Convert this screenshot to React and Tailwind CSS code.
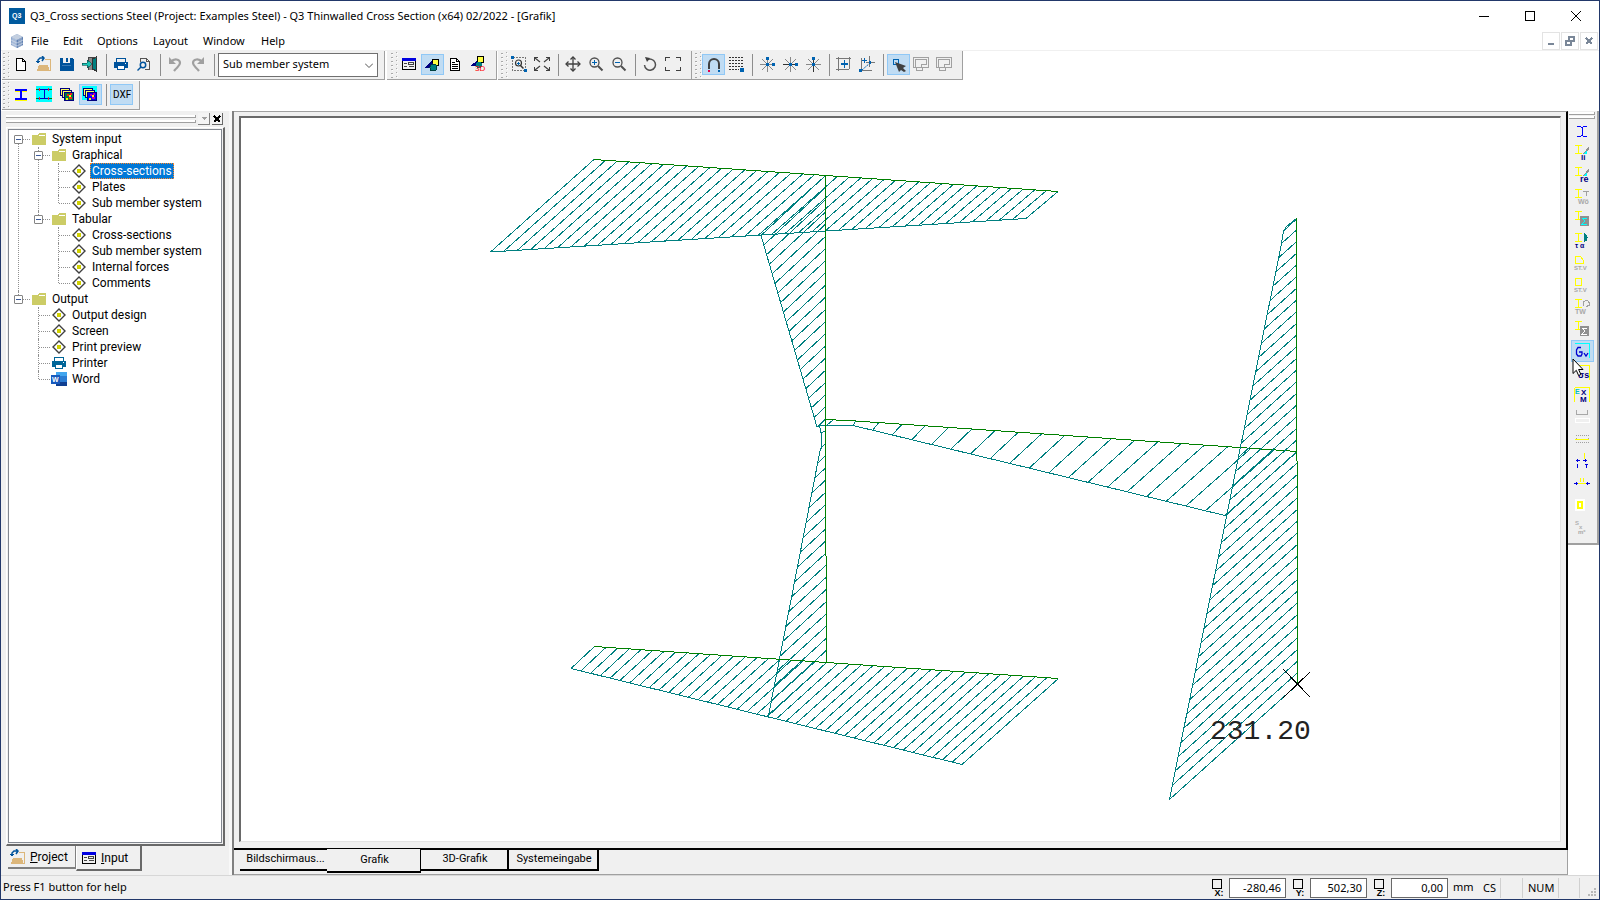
import clsx from 'clsx';

/* ---------- small building blocks ---------- */

function Icon({ children, w = 16, h = 16, className = 'size-4' }) {
  return (
    <svg viewBox={`0 0 ${w} ${h}`} className={clsx('shrink-0', className)} fill="none" shapeRendering="crispEdges" aria-hidden="true">
      {children}
    </svg>
  );
}

function Grip() {
  return (
    <svg width="8" height="26" viewBox="0 0 8 26" className="-mt-0.5 shrink-0" shapeRendering="crispEdges" aria-hidden="true">
      {[0, 1, 2, 3, 4, 5, 6].map((i) => (
        <g key={i}>
          <rect x="1" y={1 + i * 4} width="2" height="1" fill="#a8a8a8" />
          <rect x="2" y={2 + i * 4} width="1" height="1" fill="#fff" />
          <rect x="6" y={i * 4} width="1" height="1" fill="#aaa" />
          <rect x="7" y={1 + i * 4} width="1" height="1" fill="#fff" />
        </g>
      ))}
    </svg>
  );
}

function Separator() {
  return <span className="w-2 flex justify-center shrink-0"><span className="w-px h-[22px] bg-[#8d8d8d]" /></span>;
}

function ToolButton({ label, active, children }) {
  return (
    <button
      type="button"
      aria-label={label}
      title={label}
      className={clsx(
        'w-[23px] h-[21px] pl-0.5 pt-px flex items-start shrink-0 border',
        active ? 'bg-[#c0dcf3] border-[#90c8f6]' : 'border-transparent'
      )}
    >
      {children}
    </button>
  );
}

function Toolbar({ children, className }) {
  return (
    <div className={clsx('h-[29px] pt-[3px] flex items-start bg-[#f0f0f0] border-r border-b border-[#a0a0a0]', className)}>
      <Grip />
      {children}
    </div>
  );
}

/* ---------- toolbar icons ---------- */

const NewIcon = () => (
  <Icon><path d="M3.5 2.5h6l3 3v9h-9zM9.5 2.5v3h3" stroke="#000" fill="#fff" /></Icon>
);

const OpenIcon = () => (
  <Icon>
    <path d="M1 15l2-6h9l2 6z" fill="#dcb67a" />
    <path d="M9 3.5h5.500V15" stroke="#dcb67a" />
    <path d="M2 6V4l2-2h4M6 0l2 2-2 3" stroke="#00539c" strokeWidth="1.5" shapeRendering="auto" />
    <path d="M0 5h4L2 8z" fill="#00539c" />
  </Icon>
);

const SaveIcon = () => (
  <Icon><path d="M1 2h3v5h7V2h2l2 2v11H1zM7 2h2v4H7z" fill="#00539c" /><path d="M3 9.500h9" stroke="#3a7ab5" /></Icon>
);

const ExitIcon = () => (
  <Icon>
    <path d="M7 1h8v13H7z" fill="#8a8a8a" />
    <path d="M10.500 3l4-2v14l-4-2z" fill="#008080" stroke="#333" />
    <path d="M6.500 1h8M6.500 1v5M6.500 10v4" stroke="#444" />
    <path d="M0 7h5V4l5 4-5 4V9H0z" fill="#19c5b5" stroke="#004848" strokeWidth=".6" />
  </Icon>
);

const PrintIcon = ({ color = '#00539c' }) => (
  <Icon>
    <path d="M3.5 6V2.5h9V6" stroke={color} />
    <path d="M1 6h14v6H1z" fill={color} />
    <path d="M4.5 9.5h7v4h-7z" fill="#fff" stroke={color} />
    <path d="M12 7h1v1h-1z" fill="#fff" />
  </Icon>
);

const PreviewIcon = () => (
  <Icon>
    <path d="M4.500 6V2.500h6l3 3v8H9M10.500 2.500v3h3" stroke="#555" />
    <g shapeRendering="auto" stroke="#00539c" strokeWidth="1.5"><circle cx="7" cy="9" r="2.700" /><path d="M5 11L1.500 14.500" /></g>
  </Icon>
);

const UndoIcon = ({ flip }) => (
  <Icon>
    <g transform={flip ? 'matrix(-1 0 0 1 16 0)' : undefined} shapeRendering="auto">
      <path d="M4 6c3-4 9-3 9 1 0 3-3 4-6 8" stroke="#a0a0a0" strokeWidth="2.200" />
      <path d="M2 1v7h7z" fill="#a0a0a0" />
    </g>
  </Icon>
);

const FormIcon = () => (
  <Icon>
    <path d="M1.500 2.500h13v11h-13z" fill="#f0f0f0" stroke="#000" />
    <path d="M1 2h14v3H1z" fill="#0000e0" />
    <path d="M3 7.500h3M3 10.500h3" stroke="#444" />
    <path d="M7.500 6.500h5v2h-5zM7.500 10.500h5" stroke="#444" />
  </Icon>
);

const ShapesIcon = () => (
  <Icon>
    <path d="M8.500 3.500h6v6h-6z" fill="#ffff40" stroke="#000" />
    <path d="M0 12l8-7 2 7z" fill="#000080" />
    <circle cx="9.500" cy="11.500" r="3.500" fill="#008080" stroke="#004040" />
  </Icon>
);

const DocIcon = () => (
  <Icon><path d="M3.500 2.500h6l3 3v9h-9zM9.500 2.500v3h3" fill="#fff" stroke="#000" /><path d="M5 6.500h3M5 8.500h6M5 10.500h6M5 12.500h6" stroke="#000" /></Icon>
);

const Shapes3dIcon = () => (
  <Icon>
    <path d="M7.500 .5h6v6h-6z" fill="#ffff40" stroke="#000" />
    <path d="M0 10l7-5 3 5z" fill="#000080" />
    <circle cx="9" cy="9" r="3.200" fill="#008080" />
    <text x="5" y="15" fontSize="8" fill="#f00" fontFamily="Liberation Sans">3D</text>
  </Icon>
);

const ZoomWindowIcon = () => (
  <Icon>
    <path d="M1.500 1.500h13v13h-13z" stroke="#777" strokeDasharray="2 1" />
    <path d="M0 0h3v3H0zM13 13h3v3h-3z" fill="#0063b1" />
    <g shapeRendering="auto"><circle cx="7.500" cy="7" r="3" stroke="#333" strokeWidth="1.200" /><path d="M9.500 9.500l3 3" stroke="#333" strokeWidth="1.500" /></g>
    <path d="M6 7.500h3M7.500 6v3" stroke="#0063b1" />
  </Icon>
);

const ZoomExtentsIcon = () => (
  <Icon>
    <path d="M.5 5V1.500H4M12 1.500h3.500V5M15.500 11v3.500H12M4 14.500H.5V11" stroke="#404040" />
    <path d="M1 2l5 4M15 2l-5 4M1 14l5-4M15 14l-5-4" stroke="#404040" shapeRendering="auto" strokeWidth="1.200" />
  </Icon>
);

const PanIcon = () => (
  <Icon>
    <path d="M8 1v14M1 8h14" stroke="#404040" shapeRendering="auto" strokeWidth="1.300" />
    <path d="M5.500 3.500L8 1l2.500 2.500M5.500 12.500L8 15l2.500-2.500M3.500 5.500L1 8l2.500 2.500M12.500 5.500L15 8l-2.500 2.500" stroke="#404040" shapeRendering="auto" strokeWidth="1.300" />
  </Icon>
);

const ZoomIcon = ({ plus }) => (
  <Icon>
    <g shapeRendering="auto" stroke="#505050"><circle cx="6.500" cy="6.500" r="4.500" strokeWidth="1.300" /><path d="M10 10l4.500 4.500" strokeWidth="2" /></g>
    <path d={plus ? 'M4 6.500h5M6.500 4v5' : 'M4 6.500h5'} stroke="#0063b1" />
  </Icon>
);

const RotateIcon = () => (
  <Icon><g shapeRendering="auto"><path d="M5 4a5.500 5.500 0 1 1-2.500 5" stroke="#505050" strokeWidth="1.500" /><path d="M3 1l5 1-3 4z" fill="#404040" /></g></Icon>
);

const FullIcon = () => (
  <Icon><path d="M.5 5V1.500H5M11 1.500h4.500V5M15.500 11v3.500H11M5 14.500H.5V11" stroke="#404040" /></Icon>
);

const MagnetIcon = () => (
  <Icon>
    <path d="M4 13V8a5 5 0 0 1 10 0v5" stroke="#404040" strokeWidth="2" shapeRendering="auto" />
    <path d="M3 14h2v2H3z" fill="#e0004d" /><path d="M13 14h2v2h-2z" fill="#0063b1" />
  </Icon>
);

const GridIcon = () => (
  <Icon>
    {[1, 4, 7, 10, 13].map((y) => (
      <path key={y} d={`M1 ${y + 0.5}h${y > 10 ? 10 : 14}`} stroke="#333" strokeDasharray="2 1" />
    ))}
    <path d="M12 12h4v4h-4z" fill="#0063b1" />
  </Icon>
);

function StarIcon({ kind }) {
  const main = kind === 'h' ? 'M1 8.500h15' : kind === 'v' ? 'M8.500 1v15' : '';
  return (
    <Icon>
      <path d="M3 3l11 11M14 3L3 14M8.500 1v15M1 8.500h15" stroke="#888" shapeRendering="auto" />
      {main && <path d={main} stroke="#333" />}
      <path d="M7 7h3v3H7z" fill="#0063b1" />
      {kind !== 'h' && <path d="M7 1h3v3H7z" fill="#0063b1" />}
      {kind !== 'v' && <path d="M13 7h3v3h-3z" fill="#0063b1" />}
    </Icon>
  );
}

const PlusFrameIcon = () => (
  <Icon><path d="M0 2.500h15M13.500 1v12M2.500 1v14M0 13.500h13" stroke="#777" /><path d="M5 8h7M8.500 4v8" stroke="#0063b1" strokeWidth="1.500" /></Icon>
);

const PlusAxisIcon = () => (
  <Icon>
    <path d="M2.500 2v12.500H13M10.500 0v11M7 6.500h9" stroke="#777" />
    <path d="M3 14l8-7" stroke="#0063b1" strokeDasharray="2 1" shapeRendering="auto" />
    <path d="M0 13h3v3H0zM10 5h2v3h-2z" fill="#0063b1" /><path d="M3 4.500h5M5.500 2v5" stroke="#0063b1" />
  </Icon>
);

const SelectIcon = () => (
  <Icon><path d="M3.500 3.500h5v5h-5z" stroke="#0063b1" /><path d="M5 6l11 4-3 2 3 3-2 1-3-2-2 2z" fill="#404040" shapeRendering="auto" /></Icon>
);

const CopyFrameIcon = () => (
  <Icon><path d="M.5 1.500h15v10h-6v3h-6v-3h-3zM2.500 3.500h11v5h-5v3h-6z" stroke="#a0a0a0" /></Icon>
);

const BeamIcon = () => (
  <Icon><path d="M2 3h12v2H9v7h5v2H2v-2h5V5H2z" fill="#0000ff" /><path d="M2 5.500h5M9 5.500h5M2 14.500h12" stroke="#ff0" /></Icon>
);

const BeamGridIcon = () => (
  <Icon>
    <path d="M0 0h16v16H0z" fill="#0ff" />
    <path d="M2 3.500h12M2 12.500h12M8.500 3v10" stroke="#0000c0" />
    <path d="M3.500 2v3M12.500 2v3M3.500 11v3M12.500 11v3" stroke="#e03030" />
    <path d="M0 3h2v1H0zM14 3h2v1h-2zM0 12h2v1H0zM14 12h2v1h-2z" fill="#008000" />
  </Icon>
);

const LayersIcon = ({ filled }) => (
  <Icon>
    {filled && <path d="M0 0h15v14H0z" fill="#0ff" />}
    <path d="M1.500 2.500h9v7h-9z" fill="#ffff60" stroke="#000080" />
    <path d="M3.500 4.500h9v7h-9z" fill="#ffff60" stroke="#000080" />
    <path d="M5.500 6.500h9v8h-9z" fill={filled ? '#0000ff' : '#008040'} stroke="#000080" />
    <path d="M8 8h2v2H8zM11 7h2v2h-2zM10 11h3v2h-3z" fill={filled ? '#c000a0' : '#f02020'} />
    <path d="M7 12h2v2H7zM10 9h2v2h-2z" fill="#ff0" />
  </Icon>
);

/* ---------- tree ---------- */

const FolderIcon = () => (
  <Icon w={14} h={13} className="w-3.5 h-[13px]"><path d="M0 2h5l2-2h6.500v12H0z" fill="#cccc66" /><path d="M7 2.500h6" stroke="#fff" /></Icon>
);

const DiamondIcon = () => (
  <Icon w={14} h={14} className="size-3.5">
    <path d="M7 1l6 6-6 6-6-6z" fill="#fff" stroke="#404040" strokeWidth="1.400" shapeRendering="auto" />
    <circle cx="7" cy="7" r="2.500" fill="#d0d000" />
  </Icon>
);

const WordIcon = () => (
  <Icon>
    <path d="M5 1h11v14H5z" fill="#2b7cd3" /><path d="M5 1h11v4H5z" fill="#41a5ee" /><path d="M5 11h11v4H5z" fill="#103f91" />
    <path d="M0 4h9v9H0z" fill="#185abd" />
    <text x="1" y="11" fontSize="7" fontWeight="700" fill="#fff" fontFamily="Liberation Sans">W</text>
  </Icon>
);

const tree = [
  {
    label: 'System input',
    children: [
      { label: 'Graphical', children: [{ label: 'Cross-sections', selected: true }, { label: 'Plates' }, { label: 'Sub member system' }] },
      { label: 'Tabular', children: [{ label: 'Cross-sections' }, { label: 'Sub member system' }, { label: 'Internal forces' }, { label: 'Comments' }] },
    ],
  },
  {
    label: 'Output',
    children: [{ label: 'Output design' }, { label: 'Screen' }, { label: 'Print preview' }, { label: 'Printer', icon: 'printer' }, { label: 'Word', icon: 'word' }],
  },
];

function NodeIcon({ node }) {
  if (node.children) return <FolderIcon />;
  if (node.icon === 'printer') return <PrintIcon color="#006699" />;
  if (node.icon === 'word') return <WordIcon />;
  return <DiamondIcon />;
}

function TreeNode({ node, root, last }) {
  return (
    <li className="relative">
      {/* dotted guide line down to the next sibling */}
      <span className={clsx('absolute left-[9px] w-px border-l border-dotted border-[#909090]', root ? 'top-2' : 'top-0', last ? 'h-2' : 'bottom-0')} />
      <div className="h-4 flex items-center">
        <span className="relative w-[19px] h-4 flex items-center justify-center shrink-0">
          <span className="absolute left-[10px] -right-0.5 top-2 border-t border-dotted border-[#909090]" />
          {node.children && (
            <button type="button" aria-label={`Collapse ${node.label}`} className="relative size-[9px] bg-white border border-[#848484] rounded-[1px] flex items-center justify-center">
              <span className="w-[5px] h-px bg-[#3c5a9a]" />
            </button>
          )}
        </span>
        <span className="relative w-[22px] flex justify-center shrink-0"><NodeIcon node={node} /></span>
        <button
          type="button"
          className={clsx('h-4 px-0.5 leading-4 whitespace-nowrap', node.selected && 'bg-[#0078d7] text-white outline-1 -outline-offset-1 outline-dotted outline-[#ff8728]')}
        >
          {node.label}
        </button>
      </div>
      {node.children && (
        <ul className="pl-5">
          {node.children.map((child, i) => (
            <TreeNode key={child.label} node={child} last={i === node.children.length - 1} />
          ))}
        </ul>
      )}
    </li>
  );
}

function Sidebar() {
  return (
    <aside className="w-[228px] shrink-0 flex flex-col pl-[5px] pr-1 font-['Roboto',sans-serif] text-xs">
      <div className="h-4 flex items-center pr-0.5">
        <div className="flex-1 flex flex-col gap-0.5">
          <span className="h-[3px] border-b border-r border-[#a0a0a0] bg-white" />
          <span className="h-[3px] border-b border-r border-[#a0a0a0] bg-white" />
        </div>
        <button type="button" aria-label="Panel menu" className="ml-0.5 w-3 h-3 border-r border-b border-[#808080] bg-[#f4f4f4] flex items-center justify-center">
          <Icon w={6} h={3} className="w-1.5 h-[3px]"><path d="M0 0h6L3 3z" fill="#a0a0a0" /></Icon>
        </button>
        <button type="button" aria-label="Close panel" className="ml-0.5 w-[11px] h-3 border-r border-b border-[#696969] bg-[#f4f4f4] flex items-center justify-center">
          <Icon w={8} h={8} className="size-2"><path d="M1 1l6 6M7 1L1 7" stroke="#000" strokeWidth="2" /></Icon>
        </button>
      </div>
      <div className="flex-1 border-t border-l border-white border-r-2 border-b-2 border-r-[#696969] border-b-[#696969] p-px flex">
        <ul className="flex-1 bg-white border border-[#828790] pt-px">
          {tree.map((node, i) => (
            <TreeNode key={node.label} node={node} root={i === 0} last={i === tree.length - 1} />
          ))}
        </ul>
      </div>
      <div className="h-[29px] flex items-start text-xs">
        <button type="button" className="ml-0.5 w-[68px] h-[23px] flex items-center gap-1 pl-0.5 border-b-2 border-r border-[#808080]">
          <OpenIcon /><span><u>P</u>roject</span>
        </button>
        <button type="button" className="w-[66px] h-[25px] flex items-center gap-1 pl-1 border-l border-l-white border-r-2 border-b-2 border-[#696969]">
          <FormIcon /><span><u>I</u>nput</span>
        </button>
      </div>
    </aside>
  );
}

/* ---------- stress diagram ---------- */

// base = member axis, edge = stress ordinate line, n = number of hatch intervals
const members = [
  { base: [594, 159.5, 1058, 191.5], edge: [490.5, 252, 1026, 218.5], n: 40 },
  { base: [825.5, 175.5, 825.5, 419], edge: [761, 235.5, 817, 427], n: 20 },
  { base: [825.5, 443.5, 826.5, 662.5], edge: [820.5, 448.5, 768.5, 715.5], n: 18 },
  { base: [594.5, 646.5, 1058.5, 678.5], edge: [571, 668.5, 962, 764.5], n: 40 },
  { base: [855.5, 421, 1297.5, 451.5], edge: [853, 425.5, 1225, 515.5], n: 19 },
  { base: [1296.5, 230, 1297.5, 684.5], edge: [1281.5, 243.5, 1169.5, 799.5], n: 39 },
];

const at = (a, b, t) => a + (b - a) * t;

function Member({ base, edge, n }) {
  const [x1, y1, x2, y2] = base;
  const [u1, v1, u2, v2] = edge;
  const lines = Array.from({ length: n + 1 }, (_, i) => i / n);
  return (
    <g>
      {lines.map((t) => (
        <line key={t} x1={at(x1, x2, t)} y1={at(y1, y2, t)} x2={at(u1, u2, t)} y2={at(v1, v2, t)} stroke="#008080" />
      ))}
      <line x1={u1} y1={v1} x2={u2} y2={v2} stroke="#008080" />
      <line x1={x1} y1={y1} x2={x2} y2={y2} stroke="#008000" />
    </g>
  );
}

function Diagram() {
  return (
    <svg viewBox="241 118 1319 723" className="absolute inset-0 w-full h-full" fill="none" shapeRendering="crispEdges" role="img" aria-label="Shear stress diagram">
      {members.map((m, i) => <Member key={i} {...m} />)}
      {/* transitions at the web joint and the free end of the right flange */}
      <path d="M817 427l2.500-1.500 1.500 7.500v15.500M819 425h11l23 .5M819.500 425.500l6-6M827 425l6-5M821 433l4.500-2" stroke="#008080" />
      <path d="M1296.500 218.500l-10 8-3 4.500-2 12.500M1283.500 231l13-12" stroke="#008080" />
      <path d="M825.500 419.500l30 1.500M825.500 419v25M1296.500 218v12" stroke="#008000" />
      <path d="M1283.500 669.500l27 28M1310.500 671.500l-27 26" stroke="#000" />
      <text x="1210" y="739" fontSize="28" fill="#222" fontFamily="Liberation Mono, monospace">231.20</text>
    </svg>
  );
}

const sheets = [
  { label: 'Bildschirmaus...', cls: "w-[87px] h-[21px] border-b-2 ml-[6px] pl-1" },
  { label: 'Grafik', cls: 'w-[94px] h-6 border-b-2 border-r -mt-px pl-0.5 bg-[#f0f0f0]' },
  { label: '3D-Grafik', cls: 'w-[88px] h-[21px] border-b-2 border-r-2 pl-0.5' },
  { label: 'Systemeingabe', cls: 'w-[90px] h-[21px] border-b-2 border-r-2 pl-0.5' },
];

function Workspace() {
  return (
    <main className="flex-1 min-w-0 flex flex-col bg-[#f0f0f0] border-l-2 border-[#808080]">
      <div className="flex-1 flex pt-1 pl-[5px] pr-[5px] pb-1.5 border-t border-t-[#a0a0a0] border-r-2 border-r-black border-b-2 border-b-black">
        <div className="relative flex-1 bg-white border-t-2 border-l-2 border-[#696969] border-r border-b border-r-[#e3e3e3] border-b-[#e3e3e3]">
          <Diagram />
        </div>
      </div>
      <div className="h-[25px] flex items-start border-b border-r border-[#a0a0a0] font-['Roboto',sans-serif] text-[11px]">
        {sheets.map((s) => (
          <button key={s.label} type="button" className={clsx('border-black flex items-center justify-center', s.cls)}>{s.label}</button>
        ))}
      </div>
    </main>
  );
}

/* ---------- right hand dock ---------- */

const SmallText = ({ x = 2, y = 15, size = 7, fill = '#000080', children }) => (
  <text x={x} y={y} fontSize={size} fill={fill} fontFamily="Liberation Sans" fontWeight="700">{children}</text>
);

const SmallBeam = () => <path d="M1 .5h7M4.500 1v7M1 8.500h7" stroke="#ff0" />;

const dock = [
  { label: 'Section', art: <path d="M3 3.500h4M9 3.500h4M3 13.500h4M9 13.500h4M7 4.500h2M7 12.500h2M8 4v9" stroke="#0000ff" /> },
  { label: 'Left', art: <><SmallBeam /><path d="M15 1v4l-6 4z" fill="#909090" /><path d="M9 9l4-4v4z" fill="#0ff" /><SmallText x="7" size="8">li</SmallText></> },
  { label: 'Right', art: <><SmallBeam /><path d="M15 1v4l-6 4z" fill="#909090" /><path d="M9 9l4-4v4z" fill="#0ff" /><SmallText x="6" size="9">re</SmallText></> },
  { label: 'Warping', art: <><SmallBeam /><path d="M9 2.500h6M12.500 2v5" stroke="#a0a0a0" /><SmallText x="4" fill="#a8a8a8">Wö</SmallText></> },
  { label: 'Sum', art: <><SmallBeam /><path d="M6 5h9v10H6z" fill="#909090" /><path d="M13 7H8l3 3-3 3h5" stroke="#0ff" /></> },
  { label: 'Shear', art: <><SmallBeam /><path d="M10 0c5 1 5 8 0 9z" fill="#008080" /><SmallText x="1">τ α</SmallText></> },
  { label: 'Static moment open', art: <><path d="M1.500 8.500v-7h5l3 4v3z" stroke="#ff0" /><SmallText x="0" size="6" fill="#a8a8a8">ST.V</SmallText></> },
  { label: 'Static moment closed', art: <><path d="M1.500 1.500h6v7h-6z" stroke="#ff0" /><SmallText x="0" size="6" fill="#a8a8a8">ST.V</SmallText></> },
  { label: 'Torsion', art: <><SmallBeam /><path d="M9.500 7V3l2-1.500h2l1.500 2v3l-3 1" stroke="#a0a0a0" /><SmallText x="1" fill="#a8a8a8">TW</SmallText></> },
  { label: 'Sum of stresses', art: <><SmallBeam /><path d="M6 5h9v10H6z" fill="#909090" /><path d="M13 7H8l3 3-3 3h5" stroke="#fff" /></> },
  { label: 'Equivalent stress', active: true, art: <><path d="M1 .5h14.500V15" stroke="#0ff" strokeWidth="1.500" /><path d="M7 4.500H4L2.500 7v4L4 13h3l1-2V9H5M10 10l2 3 2-3" stroke="#0000d0" strokeWidth="1.300" shapeRendering="auto" /></> },
  { label: 'Stress sum', art: <><path d="M1 .5h14.500V15" stroke="#ff0" /><SmallText x="4" y="13" size="9">σs</SmallText></> },
  { label: 'Extremes', art: <><path d="M1 .5h14.500V15M.5 1v14" stroke="#ff0" /><SmallText x="1" y="7" fill="#00c0c0">E</SmallText><SmallText x="7" y="8" size="8">X</SmallText><SmallText x="6" y="15" size="8">M</SmallText></> },
  { label: 'Width', art: <><path d="M2.500 1v5M13.500 1v5M2 5.500h12" stroke="#a8a8a8" /><path d="M1 9.500h14v4H1z" stroke="#fff" /></> },
  { label: 'Plate', art: <><path d="M2 4.500h13M2 11.500h13M2 7.500h1M14 7.500h1" stroke="#a0a0a0" strokeDasharray="1 1" /><path d="M1 8.500h14" stroke="#ff0" /></> },
  { label: 'Nodes', art: <><path d="M2 7.500h4M9 7.500h4M3.500 6v3M11.500 6v3M3.500 11v4M11 11.500h3M12.500 11v4" stroke="#0000e0" /><path d="M10.500 0v6" stroke="#ff0" /></> },
  { label: 'Element', art: <><path d="M2 8.500h12" stroke="#ff0" /><path d="M6.500 3v4M9.500 3v4" stroke="#ff0" /><path d="M0 8.500h4M2.500 7v3M12 8.500h4M13.500 7v3" stroke="#0000e0" /></> },
  { label: 'Frame', art: <><path d="M1 2h10v12H1z" fill="#fff" /><path d="M4 5h4v6H4z" stroke="#ff0" strokeWidth="2" /></> },
  { label: 'Moments', art: <><SmallText x="1" y="6" fill="#b0b0b0" size="6">S</SmallText><SmallText x="5" y="10" fill="#b0b0b0" size="6">x</SmallText><SmallText x="4" y="15" fill="#a8a8a8" size="6">mˣ</SmallText></> },
];

function Dock() {
  return (
    <div className="w-[31px] shrink-0">
      <div className="bg-[#f0f0f0] border-r-2 border-b-2 border-[#a0a0a0] h-[434px] flex flex-col items-center">
        <div className="w-full pl-px pr-0.5 pt-px pb-px flex flex-col gap-px">
          <span className="h-[3px] border-b border-r border-[#a0a0a0] bg-white" />
          <span className="h-[3px] border-b border-r border-[#a0a0a0] bg-white" />
        </div>
        {dock.map((d) => (
          <button
            key={d.label}
            type="button"
            aria-label={d.label}
            className={clsx('relative w-[23px] h-[22px] pl-0.5 shrink-0 flex items-center border', d.active ? 'bg-[#c0dcf3] border-[#90c8f6]' : 'border-transparent')}
          >
            <Icon>{d.art}</Icon>
            {d.active && (
              <svg viewBox="0 0 12 19" className="absolute left-0 top-[17px] z-10 w-3 h-[19px]" aria-hidden="true">
                <path d="M1 1v14.500l3.300-3.200 2.300 5.200 2.300-1-2.300-5H11z" fill="#fff" stroke="#000" />
              </svg>
            )}
          </button>
        ))}
      </div>
    </div>
  );
}

/* ---------- window chrome ---------- */

const menus = [['File', 'w-8'], ['Edit', 'w-[34px]'], ['Options', 'w-14'], ['Layout', 'w-[50px]'], ['Window', 'w-[58px]'], ['Help', 'w-8']];

function CaptionButton({ label, d }) {
  return (
    <button type="button" aria-label={label} className="w-[46px] h-full flex items-center justify-center">
      <Icon w={10} h={10} className="size-2.5"><path d={d} stroke="#000" /></Icon>
    </button>
  );
}

function TitleBar() {
  return (
    <header className="h-[30px] flex items-center pl-2 bg-white">
      <Icon><path d="M0 0h16v16H0z" fill="#005a9e" /><text x="3" y="10" fontSize="7" fontWeight="700" fill="#fff" fontFamily="Liberation Sans">Q3</text></Icon>
      <h1 className="pl-[5px] flex-1 whitespace-nowrap">
        Q3_Cross sections Steel (Project: Examples Steel) - Q3 Thinwalled Cross Section (x64) 02/2022 - [Grafik]
      </h1>
      <CaptionButton label="Minimize" d="M0 5.500h10" />
      <CaptionButton label="Maximize" d="M.5 .5h9v9h-9z" />
      <CaptionButton label="Close" d="M0 0l10 10M10 0L0 10" />
    </header>
  );
}

function MdiButton({ label, d }) {
  return (
    <button type="button" aria-label={label} className="w-[18px] h-[18px] border border-[#e3e3e3] flex items-center justify-center">
      <Icon w={10} h={10} className="size-2.5"><path d={d} stroke="#7a8798" strokeWidth="1.500" /></Icon>
    </button>
  );
}

function MenuBar() {
  return (
    <nav className="h-5 flex items-center pl-2 pr-px bg-white border-b border-[#f0f0f0]">
      <Icon>
        <path d="M8 1l6 3v8l-6 3-6-3V4z" fill="#8fa9cf" shapeRendering="auto" />
        <path d="M8 1l6 3-6 3-6-3z" fill="#c3cfe0" shapeRendering="auto" /><path d="M8 7l6-3v8l-6 3z" fill="#5f7fb0" shapeRendering="auto" />
        <path d="M4 5v8M6 6v8M10 6v8M12 5v8M2 7l6 3 6-3M2 10l6 3 6-3" stroke="#dfe6f0" strokeWidth=".6" shapeRendering="auto" />
      </Icon>
      <div className="flex-1 flex pl-1.5 pt-0.5">
        {menus.map(([label, w]) => <button key={label} type="button" className={clsx('text-left whitespace-nowrap', w)}>{label}</button>)}
      </div>
      <div className="flex gap-px">
        <MdiButton label="Minimize document" d="M2 8h6" />
        <MdiButton label="Restore document" d="M1 5h5v4H1zM4 4V1h5v4H7" />
        <MdiButton label="Close document" d="M2 2l6 6M8 2L2 8" />
      </div>
    </nav>
  );
}

function Toolbars() {
  return (
    <div className="bg-white h-[60px] pl-px flex flex-col gap-px">
      <div className="flex">
        <Toolbar className="w-[383px]">
          <ToolButton label="New"><NewIcon /></ToolButton>
          <ToolButton label="Open"><OpenIcon /></ToolButton>
          <ToolButton label="Save"><SaveIcon /></ToolButton>
          <ToolButton label="Exit"><ExitIcon /></ToolButton>
          <Separator />
          <ToolButton label="Print"><PrintIcon /></ToolButton>
          <ToolButton label="Print preview"><PreviewIcon /></ToolButton>
          <Separator />
          <ToolButton label="Undo"><UndoIcon /></ToolButton>
          <ToolButton label="Redo"><UndoIcon flip /></ToolButton>
          <Separator />
          <div className="relative w-40 h-6 -mt-px">
            <select aria-label="System" className="w-full h-full appearance-none bg-white border border-[#707070] pl-1 pb-0.5">
              <option>Sub member system</option>
            </select>
            <Icon w={8} h={5} className="absolute right-[5px] top-[10px] w-2 h-[5px] pointer-events-none"><path d="M0 .5l4 4 4-4" stroke="#555" shapeRendering="auto" /></Icon>
          </div>
        </Toolbar>
        <Toolbar className="ml-0.5 w-[110px] pl-[3px]">
          <ToolButton label="Input form"><FormIcon /></ToolButton>
          <ToolButton label="Graphics" active><ShapesIcon /></ToolButton>
          <ToolButton label="Report"><DocIcon /></ToolButton>
          <ToolButton label="3D graphics"><Shapes3dIcon /></ToolButton>
        </Toolbar>
        <Toolbar className="ml-px w-[194px] pl-0.5">
          <ToolButton label="Zoom window"><ZoomWindowIcon /></ToolButton>
          <ToolButton label="Zoom extents"><ZoomExtentsIcon /></ToolButton>
          <Separator />
          <ToolButton label="Pan"><PanIcon /></ToolButton>
          <ToolButton label="Zoom in"><ZoomIcon plus /></ToolButton>
          <ToolButton label="Zoom out"><ZoomIcon /></ToolButton>
          <Separator />
          <ToolButton label="Rotate"><RotateIcon /></ToolButton>
          <ToolButton label="Full screen"><FullIcon /></ToolButton>
        </Toolbar>
        <Toolbar className="w-[271px] pl-0.5">
          <ToolButton label="Snap" active><MagnetIcon /></ToolButton>
          <ToolButton label="Grid"><GridIcon /></ToolButton>
          <Separator />
          <ToolButton label="Ortho"><StarIcon kind="o" /></ToolButton>
          <ToolButton label="Horizontal"><StarIcon kind="h" /></ToolButton>
          <ToolButton label="Vertical"><StarIcon kind="v" /></ToolButton>
          <Separator />
          <ToolButton label="Absolute input"><PlusFrameIcon /></ToolButton>
          <ToolButton label="Relative input"><PlusAxisIcon /></ToolButton>
          <Separator />
          <ToolButton label="Select" active><SelectIcon /></ToolButton>
          <ToolButton label="Copy frame"><CopyFrameIcon /></ToolButton>
          <ToolButton label="Move frame"><CopyFrameIcon /></ToolButton>
        </Toolbar>
      </div>
      <Toolbar className="w-[138px]">
        <ToolButton label="Cross-section"><BeamIcon /></ToolButton>
        <ToolButton label="Plates"><BeamGridIcon /></ToolButton>
        <ToolButton label="Layers"><LayersIcon /></ToolButton>
        <ToolButton label="Visible layers" active><LayersIcon filled /></ToolButton>
        <Separator />
        <ToolButton label="DXF" active><span className="font-['Roboto',sans-serif] text-[10px] leading-[18px]">DXF</span></ToolButton>
      </Toolbar>
    </div>
  );
}

function Coordinate({ axis, value }) {
  return (
    <div className="flex items-center">
      <label htmlFor={`coord-${axis}`} className="w-5 flex flex-col items-center leading-none">
        <span className="w-2.5 h-2.5 border border-black mr-1" />
        <span className="font-['Liberation_Sans',sans-serif] font-bold text-[9px] leading-[8px]">{axis}:</span>
      </label>
      <input id={`coord-${axis}`} defaultValue={value} className="w-[57px] h-5 mr-1 bg-white border border-[#696969] text-right pr-1" />
    </div>
  );
}

function StatusBar() {
  return (
    <footer className="h-6 flex items-center bg-[#f0f0f0] border-t border-[#d7d7d7] pl-0.5">
      <span className="flex-1">Press F1 button for help</span>
      <Coordinate axis="X" value="-280,46" />
      <Coordinate axis="Y" value="502,30" />
      <Coordinate axis="Z" value="0,00" />
      <span className="w-[31px] pl-px">mm</span>
      <span className="w-[18px] h-5 leading-5 border-r border-[#d0d0d0]">CS</span>
      <span className="w-[22px] h-5 border-r border-[#d0d0d0]" />
      <span className="w-9 h-5 leading-5 pl-[5px] border-r border-[#d0d0d0]">NUM</span>
      <span className="w-[21px] h-5 border-r border-[#d0d0d0]" />
      <Icon w={10} h={10} className="size-2.5 ml-[7px] mt-2 mr-0.5">
        <path d="M7 1h2v2H7zM4 4h2v2H4zM7 4h2v2H7zM1 7h2v2H1zM4 7h2v2H4zM7 7h2v2H7z" fill="#b8b8b8" />
      </Icon>
    </footer>
  );
}

export default function App() {
  return (
    <div className="h-screen flex flex-col bg-white border border-[#22386a] text-black font-['Noto_Sans',sans-serif] text-[11px] overflow-hidden">
      <TitleBar />
      <MenuBar />
      <Toolbars />
      <div className="flex-1 min-h-0 flex bg-white">
        <div className="flex bg-[#f0f0f0]"><Sidebar /></div>
        <span className="w-[3px] shrink-0 bg-[#f8f8f8]" />
        <Workspace />
        <Dock />
      </div>
      <StatusBar />
    </div>
  );
}
